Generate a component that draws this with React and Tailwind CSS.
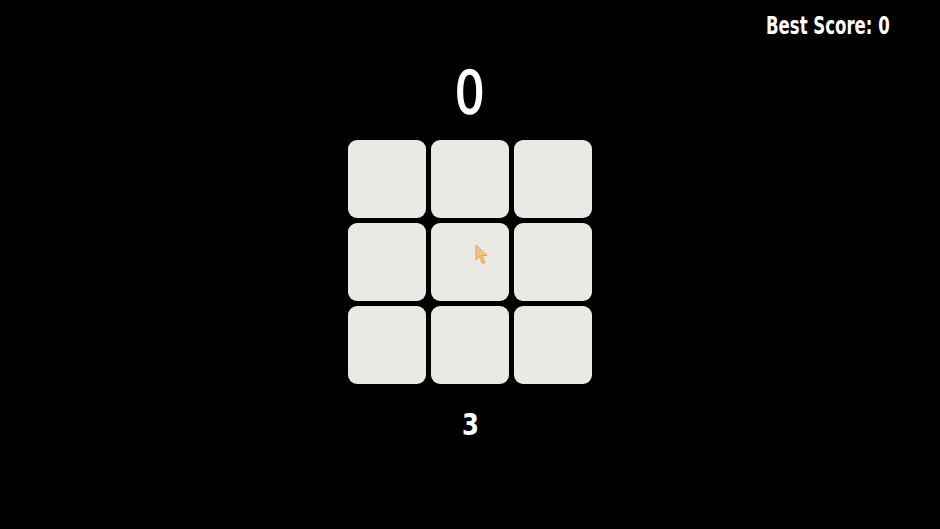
import React from "react";

const font = { fontFamily: '"DejaVu Sans Condensed", "Liberation Sans Narrow", "Liberation Sans", sans-serif' };

function Cursor() {
  return (
    <svg width="14" height="22" viewBox="0 0 14 22" className="absolute left-[44px] top-[21px]">
      <path d="M1 1 L1 16 L4.5 12.5 L7.5 19.5 L10 18.5 L7 11.5 L12 11.5 Z" fill="#f6c27a" stroke="#e7a04a" strokeWidth="1" strokeLinejoin="round" />
    </svg>
  );
}

export default function App() {
  const tiles = Array.from({ length: 9 });
  return (
    <div className="w-[940px] h-[529px] bg-black text-white overflow-hidden" style={font}>
      <div className="flex justify-end pr-[50px] pt-[9px] h-[40px]">
        <span className="inline-block text-[23px] font-semibold origin-right scale-x-[0.8] scale-y-[1.05]">Best Score: 0</span>
      </div>
      <div className="flex flex-col items-center">
        <div className="text-[58px] leading-none mt-[24px] h-[76px] scale-x-90 [-webkit-text-stroke:1.5px_white]">0</div>
        <div className="grid grid-cols-3 gap-[5px]">
          {tiles.map((_, i) => (
            <div key={i} className="relative w-[78px] h-[78px] rounded-[9px] bg-[#eae9e4]">
              {i === 4 && <Cursor />}
            </div>
          ))}
        </div>
        <div className="text-[30px] font-semibold mt-[26px] leading-none scale-x-90">3</div>
      </div>
    </div>
  );
}
